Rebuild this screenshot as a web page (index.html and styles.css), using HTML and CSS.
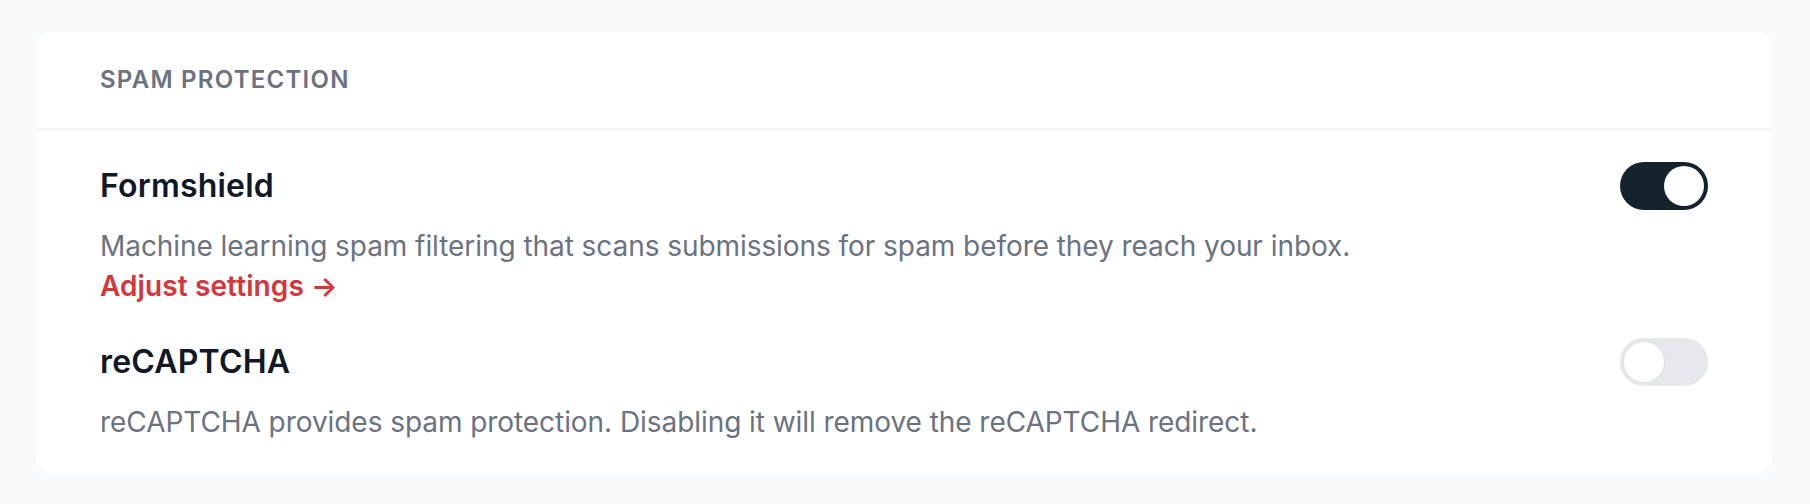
FILE: index.html
```html
<!DOCTYPE html>
<html lang="en">
<head>
<meta charset="utf-8">
<title>Spam protection</title>
<link rel="stylesheet" href="styles.css">
</head>
<body>
<main class="page">
  <section class="card">
    <header class="card-header">
      <h2 class="card-title">Spam Protection</h2>
    </header>
    <div class="card-body">
      <div class="setting">
        <div class="setting-row">
          <h3 class="setting-name">Formshield</h3>
          <button class="toggle toggle-on" type="button" aria-pressed="true"><span class="knob"></span></button>
        </div>
        <p class="setting-desc">Machine learning spam filtering that scans submissions for spam before they reach your inbox.</p>
        <a class="setting-link" href="#">Adjust settings →</a>
      </div>
      <div class="setting">
        <div class="setting-row">
          <h3 class="setting-name">reCAPTCHA</h3>
          <button class="toggle toggle-off" type="button" aria-pressed="false"><span class="knob"></span></button>
        </div>
        <p class="setting-desc">reCAPTCHA provides spam protection. Disabling it will remove the reCAPTCHA redirect.</p>
      </div>
    </div>
  </section>
</main>
</body>
</html>
```
FILE: styles.css
```css
* { box-sizing: border-box; }
html, body { margin: 0; padding: 0; }
body {
  background: #f9fafb;
  font-family: Inter, "Noto Sans", "Liberation Sans", sans-serif;
  -webkit-font-smoothing: antialiased;
}
.page {
  padding: 32px 38px 30px 36px;
}
.card {
  background: #ffffff;
  border-radius: 16px;
  overflow: hidden;
}
.card-header {
  padding: 32px 64px;
  border-bottom: 2px solid #f3f4f6;
}
.card-title {
  margin: 0;
  font-size: 24px;
  line-height: 32px;
  font-weight: 600;
  letter-spacing: 1.25px;
  text-transform: uppercase;
  color: #6b7280;
}
.card-body {
  padding: 32px 64px;
  display: flex;
  flex-direction: column;
  gap: 32px;
}
.setting {
  display: flex;
  flex-direction: column;
}
.setting-row {
  display: flex;
  align-items: center;
  justify-content: space-between;
}
.setting-name {
  margin: 0;
  font-size: 32px;
  line-height: 48px;
  font-weight: 600;
  letter-spacing: 0.2px;
  color: #111827;
}
.setting-desc {
  margin: 16px 0 0;
  font-size: 28px;
  line-height: 40px;
  letter-spacing: -0.06px;
  color: #6b7280;
}
.setting-link {
  font-size: 28px;
  line-height: 40px;
  font-weight: 600;
  letter-spacing: 0.1px;
  color: #d7343c;
  text-decoration: none;
  align-self: flex-start;
}
.toggle {
  position: relative;
  width: 88px;
  height: 48px;
  border: 0;
  border-radius: 24px;
  padding: 0;
  cursor: pointer;
  flex-shrink: 0;
}
.toggle-on { background: #15232d; }
.toggle-off { background: #e5e7eb; }
.knob {
  position: absolute;
  top: 4px;
  width: 40px;
  height: 40px;
  border-radius: 50%;
  background: #ffffff;
}
.toggle-on .knob { left: 44px; }
.toggle-off .knob {
  left: 4px;
  box-shadow: 0 0 0 1px #e0e2e6;
}
```
